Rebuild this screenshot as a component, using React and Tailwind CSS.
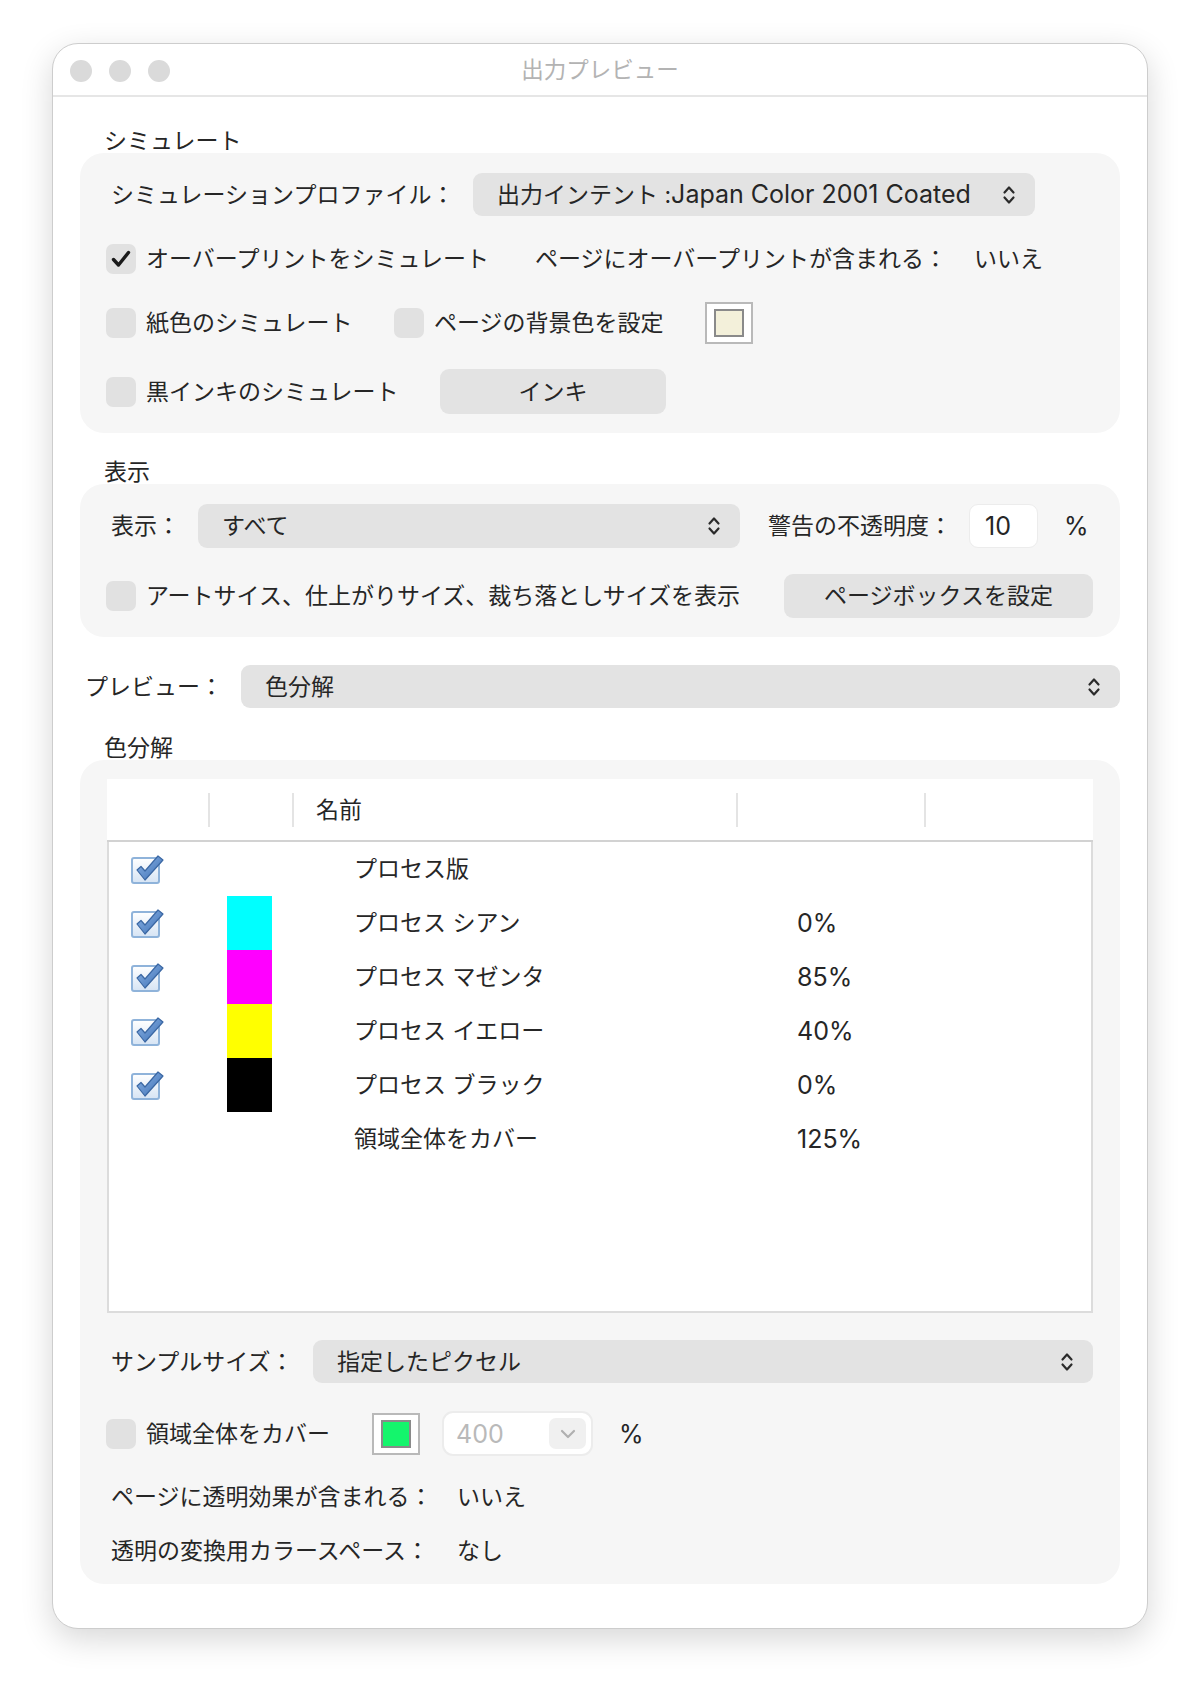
import React from "react";

const FONT = "font-['Inter','Noto_Sans_CJK_JP',sans-serif]";
const LAT = "text-[25px]";

function UpDown() {
  return (
    <svg width="14" height="24" viewBox="0 0 14 24" className="shrink-0">
      <path
        d="M2.5 9.5 L7 4.5 L11.5 9.5 M2.5 14.5 L7 19.5 L11.5 14.5"
        fill="none"
        stroke="#2b2b2b"
        strokeWidth="2.2"
        strokeLinecap="round"
        strokeLinejoin="round"
      />
    </svg>
  );
}

function Check({ checked }) {
  return (
    <span className="w-[30px] h-[30px] rounded-[7px] bg-[#e1e1e1] flex items-center justify-center shrink-0">
      {checked && (
        <svg width="22" height="20" viewBox="0 0 22 20">
          <path
            d="M3.5 10.5 L8.5 16 L18.5 3.5"
            fill="none"
            stroke="#1a1a1a"
            strokeWidth="3.4"
            strokeLinecap="round"
            strokeLinejoin="round"
          />
        </svg>
      )}
    </span>
  );
}

function TableCheck() {
  return (
    <svg width="36" height="32" viewBox="0 0 36 32" className="shrink-0">
      <defs>
        <linearGradient id="tcbox" x1="0" y1="0" x2="0" y2="1">
          <stop offset="0" stopColor="#ffffff" />
          <stop offset="1" stopColor="#d6e4f4" />
        </linearGradient>
        <linearGradient id="tcmark" x1="0" y1="0" x2="1" y2="1">
          <stop offset="0" stopColor="#8cb4e6" />
          <stop offset="1" stopColor="#3c6fb4" />
        </linearGradient>
      </defs>
      <rect x="2" y="5" width="27" height="25" rx="2" fill="url(#tcbox)" stroke="#8fb3da" strokeWidth="2" />
      <path
        d="M7 17 L11 13.5 L15 18 L28 3 L33 7 L15 27 Z"
        fill="url(#tcmark)"
        stroke="#3a67a3"
        strokeWidth="1.2"
        strokeLinejoin="round"
      />
    </svg>
  );
}

function Swatch({ color }) {
  return (
    <span className="w-[48px] h-[42px] border-2 border-[#b9b9b9] bg-white flex items-center justify-center shrink-0">
      <span className="w-[30px] h-[28px] border-2 border-[#8a8a8a]" style={{ backgroundColor: color }} />
    </span>
  );
}

function Popup({ children, className }) {
  return (
    <div className={"h-[43px] rounded-[9px] bg-[#e3e3e3] flex items-center justify-between pl-[24px] pr-[19px] " + className}>
      <span>{children}</span>
      <UpDown />
    </div>
  );
}

function GrayButton({ text, className }) {
  return (
    <div className={"rounded-[9px] bg-[#e3e3e3] flex items-center justify-center " + className}>
      {text}
    </div>
  );
}

const rows = [
  { name: "プロセス版", pct: "", color: null },
  { name: "プロセス シアン", pct: "0%", color: "#00ffff" },
  { name: "プロセス マゼンタ", pct: "85%", color: "#ff00ff" },
  { name: "プロセス イエロー", pct: "40%", color: "#ffff00" },
  { name: "プロセス ブラック", pct: "0%", color: "#000000" },
];

export default function App() {
  return (
    <div className={"w-[1200px] h-[1689px] bg-white pt-[43px] text-[23px] leading-[24px] text-[#262626] " + FONT}>
      <div className="mx-auto w-[1096px] h-[1586px] rounded-[26px] bg-white border border-[#cdcdcd] shadow-[0_10px_32px_rgba(0,0,0,0.16)] overflow-hidden">
        {/* title bar */}
        <div className="h-[53px] border-b-2 border-[#e6e6e6] grid grid-cols-[1fr_auto_1fr] items-center">
          <div className="flex items-center gap-[17px] pl-[17px] pt-[2px]">
            <span className="w-[22px] h-[22px] rounded-full bg-[#dadada]" />
            <span className="w-[22px] h-[22px] rounded-full bg-[#dadada]" />
            <span className="w-[22px] h-[22px] rounded-full bg-[#dadada]" />
          </div>
          <div className="text-[22.5px] text-[#b3b3b3]">出力プレビュー</div>
          <div />
        </div>

        <div className="px-[27px]">
          {/* simulate */}
          <div className="mt-[32px] h-[24px] pl-[24px]">シミュレート</div>
          <div className="h-[280px] rounded-[24px] bg-[#f6f6f6] pt-[20px]">
            <div className="flex items-center h-[43px]">
              <span className="ml-[31px] w-[362px]">シミュレーションプロファイル：</span>
              <Popup className="w-[562px]">
                出力インテント :<span className={LAT}>Japan Color 2001 Coated</span>
              </Popup>
            </div>
            <div className="flex items-center h-[40px] mt-[23px]">
              <div className="ml-[26px] w-[429px] flex items-center gap-[10px]">
                <Check checked />
                <span>オーバープリントをシミュレート</span>
              </div>
              <span className="w-[439px]">ページにオーバープリントが含まれる：</span>
              <span>いいえ</span>
            </div>
            <div className="flex items-center h-[40px] mt-[24px]">
              <div className="ml-[26px] w-[288px] flex items-center gap-[10px]">
                <Check />
                <span>紙色のシミュレート</span>
              </div>
              <div className="w-[311px] flex items-center gap-[10px]">
                <Check />
                <span>ページの背景色を設定</span>
              </div>
              <Swatch color="#f3f0da" />
            </div>
            <div className="flex items-center h-[45px] mt-[26px]">
              <div className="ml-[26px] w-[334px] flex items-center gap-[10px]">
                <Check />
                <span>黒インキのシミュレート</span>
              </div>
              <GrayButton text="インキ" className="w-[226px] h-[45px]" />
            </div>
          </div>

          {/* display */}
          <div className="mt-[27px] h-[24px] pl-[24px]">表示</div>
          <div className="h-[153px] rounded-[24px] bg-[#f6f6f6] pt-[20px]">
            <div className="flex items-center h-[44px]">
              <span className="ml-[31px] w-[87px]">表示：</span>
              <Popup className="w-[542px] h-[44px]">すべて</Popup>
              <span className="ml-[28px] w-[201px]">警告の不透明度：</span>
              <div className={"w-[69px] h-[44px] rounded-[9px] bg-white border border-[#ececec] flex items-center pl-[15px] " + LAT}>
                10
              </div>
              <span className={"ml-[26px] " + LAT}>%</span>
            </div>
            <div className="flex items-center h-[44px] mt-[26px]">
              <div className="ml-[26px] w-[678px] flex items-center gap-[10px]">
                <Check />
                <span>アートサイス、仕上がりサイズ、裁ち落としサイズを表示</span>
              </div>
              <GrayButton text="ページボックスを設定" className="w-[309px] h-[44px]" />
            </div>
          </div>

          {/* preview */}
          <div className="mt-[28px] flex items-center h-[43px]">
            <span className="ml-[5px] w-[156px]">プレビュー：</span>
            <Popup className="flex-1 pl-[23px] pr-[19px]">色分解</Popup>
          </div>

          {/* separations */}
          <div className="mt-[28px] h-[24px] pl-[24px]">色分解</div>
          <div className="h-[824px] rounded-[24px] bg-[#f6f6f6] pt-[19px] px-[27px]">
            <div className="h-[534px] bg-white flex flex-col">
              <div className="h-[63px] flex items-center border-b-2 border-[#d2d2d2]">
                <span className="ml-[101px] w-[2px] h-[34px] bg-[#e4e4e4]" />
                <span className="ml-[82px] w-[2px] h-[34px] bg-[#e4e4e4]" />
                <span className="ml-[22px] w-[420px]">名前</span>
                <span className="w-[2px] h-[34px] bg-[#e4e4e4]" />
                <span className="ml-[186px] w-[2px] h-[34px] bg-[#e4e4e4]" />
              </div>
              <div className="flex-1 border-x-2 border-b-2 border-[#dcdcdc]">
                {rows.map((r) => (
                  <div key={r.name} className="h-[54px] flex items-center">
                    <span className="ml-[21px] w-[97px] flex items-center">
                      <TableCheck />
                    </span>
                    <span className="w-[45px] h-[54px]" style={{ backgroundColor: r.color || "transparent" }} />
                    <span className="ml-[82px] w-[443px]">{r.name}</span>
                    <span className={LAT}>{r.pct}</span>
                  </div>
                ))}
                <div className="h-[54px] flex items-center">
                  <span className="ml-[245px] w-[443px]">領域全体をカバー</span>
                  <span className={LAT}>125%</span>
                </div>
              </div>
            </div>

            <div className="mt-[27px] flex items-center h-[43px]">
              <span className="ml-[4px] w-[202px]">サンプルサイズ：</span>
              <Popup className="flex-1">指定したピクセル</Popup>
            </div>

            <div className="mt-[28px] flex items-center h-[45px]">
              <div className="-ml-[1px] w-[266px] flex items-center gap-[10px]">
                <Check />
                <span>領域全体をカバー</span>
              </div>
              <Swatch color="#14f56c" />
              <div className={"ml-[22px] w-[151px] h-[45px] rounded-[11px] bg-white border-2 border-[#ececec] flex items-center justify-between pl-[12px] pr-[5px] text-[#b9b9b9] " + LAT}>
                <span>400</span>
                <span className="w-[37px] h-[31px] rounded-[7px] bg-[#f0f0f0] flex items-center justify-center">
                  <svg width="16" height="10" viewBox="0 0 16 10">
                    <path d="M2 2 L8 8 L14 2" fill="none" stroke="#b0b0b0" strokeWidth="2.2" strokeLinecap="round" strokeLinejoin="round" />
                  </svg>
                </span>
              </div>
              <span className={"ml-[26px] " + LAT}>%</span>
            </div>

            <div className="mt-[21px] flex items-center h-[40px]">
              <span className="ml-[4px] w-[346px]">ページに透明効果が含まれる：</span>
              <span>いいえ</span>
            </div>
            <div className="mt-[14px] flex items-center h-[40px]">
              <span className="ml-[4px] w-[346px]">透明の変換用カラースペース：</span>
              <span>なし</span>
            </div>
          </div>
        </div>
      </div>
    </div>
  );
}
